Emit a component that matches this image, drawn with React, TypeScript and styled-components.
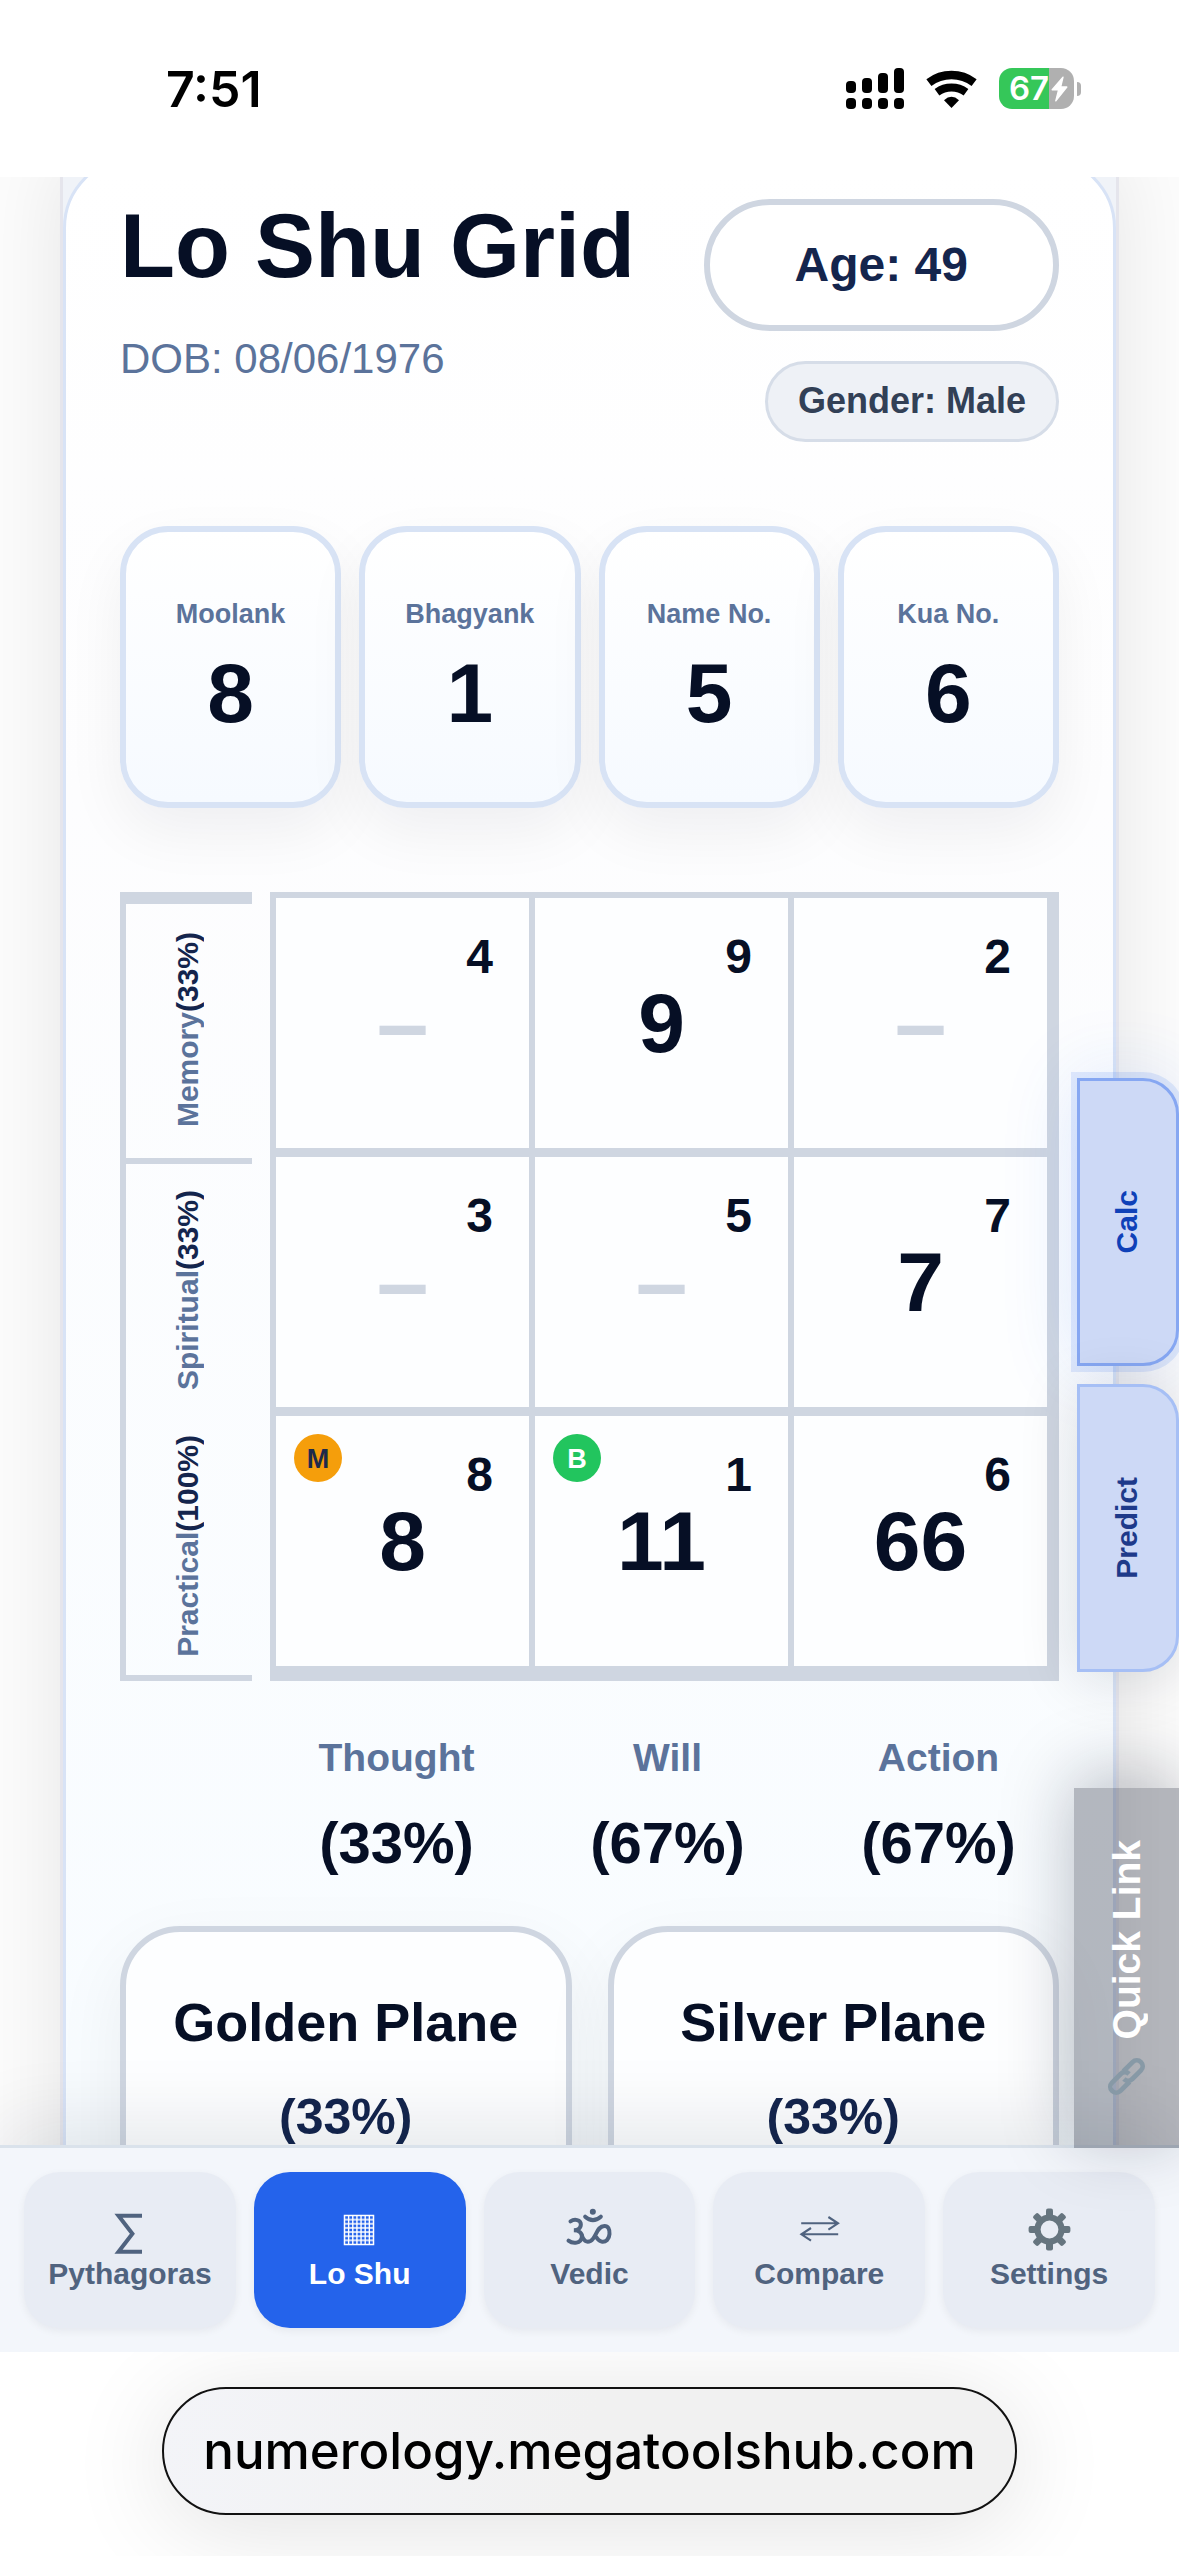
import React from "react";
import styled, { createGlobalStyle, css } from "styled-components";

const GlobalStyle = createGlobalStyle`
  *, *::before, *::after { box-sizing: border-box; }
  body {
    margin: 0;
    background: #ffffff;
    font-family: "Liberation Sans", Arial, sans-serif;
    color: #060f25;
  }
  h1, h2, p { margin: 0; }
  button { font-family: inherit; margin: 0; cursor: pointer; }
`;

const Screen = styled.div`
  display: flex;
  flex-direction: column;
  height: 100vh;
  overflow: hidden;
`;

/* ---------- status bar ---------- */

const StatusBar = styled.header`
  display: flex;
  flex: none;
  align-items: center;
  justify-content: space-between;
  height: 177px;
  padding: 0 98px 0 166px;
  background: #ffffff;
`;

const Clock = styled.time`
  font: 600 50px/60px Inter, sans-serif;
  color: #000000;
`;

const StatusIcons = styled.div`
  display: flex;
  align-items: center;
  gap: 22px;
`;

const Battery = styled.div`
  display: flex;
  align-items: center;
  gap: 3px;
`;

const BatteryBody = styled.div`
  display: flex;
  align-items: center;
  justify-content: flex-end;
  gap: 2px;
  width: 75px;
  height: 41px;
  padding-right: 6px;
  border-radius: 13px;
  background: linear-gradient(90deg, #35c759 67%, #b0b0b0 67%);
  color: #ffffff;
  font: 600 33px/41px Inter, sans-serif;

  svg { flex: none; }
`;

const BatteryTip = styled.span`
  width: 4px;
  height: 14px;
  border-radius: 0 6px 6px 0;
  background: #b0b0b0;
`;

/* ---------- page ---------- */

const Viewport = styled.main`
  position: relative;
  flex: 1;
  min-height: 0;
  overflow: hidden;
  background: #fcfcfc;
`;

const Panel = styled.div`
  margin: 0 60px;
  padding: 0 0 60px;
  border: solid #e5e5ec;
  border-width: 0 3px;
  background: #f0f3f8;
  box-shadow: 0 0 80px rgba(0, 0, 0, 0.09);
`;

const Card = styled.section`
  margin-top: -21px;
  padding: 40px 54px 60px;
  border: 3px solid #d8e3f6;
  border-radius: 72px;
  background: linear-gradient(180deg, #ffffff 0%, #fdfdfe 30%, #f8fcff 90%);
`;

const CardHeader = styled.div`
  display: flex;
  justify-content: space-between;
  align-items: flex-start;
  margin-bottom: 84px;
`;

const Title = styled.h1`
  margin-bottom: 42px;
  font-size: 90px;
  line-height: 94px;
`;

const BirthDate = styled.p`
  font-size: 42px;
  line-height: 48px;
  color: #5b739b;
`;

const Pills = styled.div`
  display: flex;
  flex-direction: column;
  align-items: flex-end;
  gap: 30px;
`;

const AgePill = styled.div`
  padding: 33px 85px;
  border: 6px solid #cfd6e1;
  border-radius: 66px;
  background: #ffffff;
  font-weight: 700;
  font-size: 48px;
  line-height: 54px;
  color: #14254d;
`;

const GenderPill = styled.div`
  padding: 16px 30px 17px;
  border: 3px solid #d6dde8;
  border-radius: 42px;
  background: #eef1f6;
  font-weight: 700;
  font-size: 36px;
  line-height: 42px;
  color: #324056;
`;

const Stats = styled.div`
  display: grid;
  grid-template-columns: repeat(4, 1fr);
  gap: 18px;
  margin-bottom: 84px;
`;

const Stat = styled.div`
  display: flex;
  flex-direction: column;
  align-items: center;
  justify-content: center;
  gap: 22px;
  height: 282px;
  border: 6px solid #d8e3f5;
  border-radius: 48px;
  background: linear-gradient(180deg, #ffffff, #f6faff);
  box-shadow: 0 24px 60px rgba(15, 23, 42, 0.06);
`;

const StatLabel = styled.span`
  font-weight: 700;
  font-size: 27px;
  line-height: 30px;
  color: #5b739b;
`;

const BigNumber = styled.span`
  font-weight: 700;
  font-size: 84px;
  line-height: 84px;
`;

/* ---------- lo shu grid ---------- */

const GridRow = styled.div`
  display: grid;
  grid-template-columns: 132px 1fr;
  gap: 18px;
`;

const PlaneRail = styled.div`
  display: grid;
  grid-template-rows: 258fr 254fr 259fr;
  border: solid #cfd6e1;
  border-width: 12px 0 0 6px;
`;

const RailItem = styled.div<{ $ruled: boolean }>`
  display: flex;
  align-items: center;
  justify-content: center;
  min-height: 0;
  padding: 0 3px 3px 0;
  border-bottom: ${(p) => (p.$ruled ? "6px solid #cfd6e1" : "0")};
`;

const RailText = styled.span`
  writing-mode: vertical-rl;
  transform: rotate(180deg);
  font-weight: 700;
  font-size: 30px;
  line-height: 36px;
  white-space: nowrap;
  color: #5b739b;

  strong { color: #14254d; }
`;

const Grid = styled.div`
  display: grid;
  grid-template-columns: repeat(3, 1fr);
  border: 6px solid #cfd6e1;
`;

const Cell = styled.div`
  position: relative;
  display: flex;
  align-items: center;
  justify-content: center;
  aspect-ratio: 1;
  border: solid #cfd6e1;
  border-width: 0 6px 9px 0;
  background: #fdfeff;
`;

const Position = styled.span`
  position: absolute;
  top: 35px;
  right: 36px;
  font-weight: 700;
  font-size: 48px;
  line-height: 48px;
`;

const Missing = styled(BigNumber)`
  font-size: 93px;
  color: #cfd6e1;
`;

const Badge = styled.span<{ $kind: "M" | "B" }>`
  position: absolute;
  top: 18px;
  left: 18px;
  width: 48px;
  height: 48px;
  border-radius: 50%;
  text-align: center;
  font-weight: 700;
  font-size: 27px;
  line-height: 50px;
  ${(p) =>
    p.$kind === "M"
      ? css`background: #f59e0b; color: #1e2a4a;`
      : css`background: #22c55e; color: #ffffff;`}
`;

const ColumnTotals = styled.div`
  display: grid;
  grid-template-columns: repeat(3, 1fr);
  gap: 30px;
  margin: 54px 0 50px;
  padding-left: 156px;
`;

const Total = styled.div`
  display: flex;
  flex-direction: column;
  align-items: center;
  gap: 30px;
  font-weight: 700;
  font-size: 58px;
  line-height: 66px;
`;

const TotalLabel = styled.span`
  font-size: 39px;
  line-height: 45px;
  color: #5b739b;
`;

const Planes = styled.div`
  display: grid;
  grid-template-columns: repeat(2, 1fr);
  gap: 36px;
`;

const PlaneCard = styled.article`
  display: flex;
  flex-direction: column;
  align-items: center;
  gap: 38px;
  padding: 60px 0;
  border: 6px solid #cfd6e1;
  border-radius: 60px;
  background: #fdfeff;
  box-shadow: 0 24px 72px rgba(15, 23, 42, 0.06);
`;

const PlaneTitle = styled.h2`
  font-size: 54px;
  line-height: 60px;
`;

const PlaneValue = styled.p`
  font-weight: 700;
  font-size: 50px;
  line-height: 54px;
  color: #14254d;
`;

/* ---------- floating side controls ---------- */

const SideTabs = styled.div`
  position: absolute;
  top: 901px;
  right: 0;
  display: flex;
  flex-direction: column;
  gap: 18px;
`;

const SideTab = styled.button<{ $active?: boolean }>`
  display: flex;
  align-items: center;
  justify-content: center;
  width: 102px;
  height: 288px;
  padding: 0 3px 0 0;
  border: 3px solid ${(p) => (p.$active ? "#86a7f2" : "#a6bff5")};
  border-radius: 0 36px 36px 0;
  background: #cdd9f6;
  color: ${(p) => (p.$active ? "#0f41b8" : "#1e3a8a")};
  box-shadow: ${(p) =>
    p.$active
      ? "0 0 0 6px rgba(37, 99, 235, 0.12), 0 0 80px rgba(37, 99, 235, 0.14)"
      : "0 6px 60px rgba(15, 23, 42, 0.14)"};
`;

const SideText = styled.span`
  writing-mode: vertical-rl;
  transform: rotate(180deg);
  font-weight: 700;
  font-size: 30px;
  line-height: 36px;
`;

const QuickLink = styled.button`
  position: absolute;
  right: 0;
  bottom: 100%;
  display: flex;
  flex-direction: column;
  align-items: center;
  justify-content: center;
  gap: 18px;
  width: 105px;
  height: 360px;
  padding: 0;
  border: 0;
  background: rgba(15, 23, 42, 0.3);
  color: #ffffff;
  box-shadow: 0 -12px 72px rgba(15, 23, 42, 0.28);
`;

const QuickText = styled.span`
  writing-mode: vertical-rl;
  transform: rotate(180deg);
  font-weight: 700;
  font-size: 39px;
  line-height: 45px;
`;

/* ---------- bottom navigation ---------- */

const Nav = styled.nav`
  position: relative;
  z-index: 1;
  display: grid;
  flex: none;
  grid-template-columns: repeat(5, 1fr);
  gap: 18px;
  padding: 24px;
  border-top: 3px solid #dae2eb;
  background: #f3f6fb;
  box-shadow: 0 -24px 72px rgba(15, 23, 42, 0.09);
`;

const NavItem = styled.button<{ $active?: boolean }>`
  display: flex;
  flex-direction: column;
  align-items: center;
  justify-content: center;
  gap: 6px;
  min-width: 0;
  height: 156px;
  padding: 0;
  border: 0;
  border-radius: 36px;
  background: ${(p) => (p.$active ? "#2463eb" : "#e8ecf4")};
  color: ${(p) => (p.$active ? "#ffffff" : "#50637f")};
  font-weight: 700;
  font-size: 30px;
  line-height: 36px;
  box-shadow: 0 3px 9px rgba(15, 23, 42, 0.06);
`;

const NavIcon = styled.svg`
  display: block;
  width: 45px;
  height: 42px;
  overflow: visible;
  fill: none;
  stroke: currentColor;
`;

/* ---------- browser address bar ---------- */

const AddressBar = styled.footer`
  position: relative;
  z-index: 2;
  display: flex;
  flex: none;
  justify-content: center;
  height: 204px;
  padding: 35px 162px 41px;
  overflow: hidden;
  background: #ffffff;
`;

const Address = styled.button`
  flex: 1;
  padding: 0;
  border: 2px solid #111111;
  border-radius: 64px;
  background: linear-gradient(100deg, #f3f4f8, #f1f1f1 50%);
  color: #000000;
  font: 500 51px/60px Inter, sans-serif;
  box-shadow: 0 12px 100px rgba(0, 0, 0, 0.12);
`;

/* ---------- drawings ---------- */

const SignalIcon = () => (
  <svg width="58" height="41" viewBox="0 0 58 41" aria-hidden="true">
    {[13, 10, 5, 0].map((y, i) => (
      <g key={y}>
        <rect x={i * 16} y={y} width="10" height={25 - y} rx="4" />
        <rect x={i * 16} y="30" width="10" height="11" rx="4" />
      </g>
    ))}
  </svg>
);

const WifiIcon = () => (
  <svg width="51" height="38" viewBox="0 0 51 38" aria-hidden="true">
    <path d="M2.9 12.6A37.6 37.6 0 0 1 48.1 12.6" fill="none" stroke="#000" strokeWidth="8.4" />
    <path d="M11 22.2A24.6 24.6 0 0 1 40 22.2" fill="none" stroke="#000" strokeWidth="8" />
    <path d="M18 30.2Q25.5 23.4 33 30.2L25.5 38Z" />
  </svg>
);

const BoltIcon = () => (
  <svg width="17" height="26" viewBox="0 0 17 26" aria-hidden="true">
    <path
      d="M12 1.2L1.2 13.8H7.6L4.8 24.8L15.8 11H9.6Z"
      fill="#fff"
      stroke="#fff"
      strokeWidth="1.4"
      strokeLinejoin="round"
    />
  </svg>
);

const LinkIcon = () => (
  <svg width="39" height="39" viewBox="0 0 39 39" fill="none" stroke="#8799a6" strokeWidth="4.8" aria-hidden="true">
    <g transform="rotate(-45 19.5 19.5)">
      <path d="M18 25.4H5A5.9 5.9 0 0 1 5 13.6H17.2A5.9 5.9 0 0 1 23.1 19.5" />
      <path d="M21 13.6H34A5.9 5.9 0 0 1 34 25.4H21.8A5.9 5.9 0 0 1 15.9 19.5" />
    </g>
  </svg>
);

const SumIcon = () => (
  <NavIcon viewBox="0 0 45 42" strokeWidth="4" aria-hidden="true">
    <path d="M35 7.8H11.5L25.4 25.8L11.5 43.8H35" />
  </NavIcon>
);

const GridIcon = () => (
  <NavIcon viewBox="0 0 45 42" aria-hidden="true">
    <rect x="7.5" y="7.5" width="29" height="29" strokeWidth="1.5" />
    {[1, 2, 3, 4, 5, 6].map((i) => (
      <g key={i}>
        <path d={`M${7.5 + i * 4.14} 7.5V36.5`} strokeWidth="1.4" />
        <path d={`M7.5 ${7.5 + i * 4.14}H36.5`} strokeWidth="2" opacity="0.75" />
      </g>
    ))}
  </NavIcon>
);

const OmIcon = () => (
  <NavIcon viewBox="79.5 54 135 126" strokeWidth="12" strokeLinecap="round" aria-hidden="true">
    <circle cx="157" cy="65" r="9" fill="currentColor" stroke="none" />
    <path d="M134 80Q157 101 181 80" />
    <path d="M90 94C102 86 121 89 121 103C121 116 111 121 100 121C116 121 126 129 124 142C121 160 98 163 84 152" />
    <path d="M124 136C128 152 138 159 150 153C168 143 168 108 192 108C203 108 208 118 207 132C206 148 196 156 185 155C174 154 170 146 164 136" />
  </NavIcon>
);

const SwapIcon = () => (
  <NavIcon viewBox="0 0 45 42" strokeWidth="2.1" aria-hidden="true">
    <path d="M4.2 15.3H40.6M31.4 9L41 15.3L31.4 21.6" />
    <path d="M41.2 26.3H4.8M14 20L4.4 26.3L14 32.6" />
  </NavIcon>
);

const GearIcon = () => (
  <NavIcon viewBox="0 0 45 42" aria-hidden="true">
    <g stroke="#66757f">
      <circle cx="22.5" cy="21.5" r="12" strokeWidth="6.2" />
      {[0, 45, 90, 135, 180, 225, 270, 315].map((a) => (
        <rect
          key={a}
          x="19"
          y="0.6"
          width="7"
          height="8.6"
          rx="2"
          fill="#66757f"
          stroke="none"
          transform={`rotate(${a} 22.5 21.5)`}
        />
      ))}
    </g>
  </NavIcon>
);

/* ---------- data ---------- */

const stats = [
  { label: "Moolank", value: 8 },
  { label: "Bhagyank", value: 1 },
  { label: "Name No.", value: 5 },
  { label: "Kua No.", value: 6 },
];

const rail = [
  { name: "Memory", value: "(33%)", ruled: true },
  { name: "Spiritual", value: "(33%)", ruled: false },
  { name: "Practical", value: "(100%)", ruled: true },
];

const cells: { position: number; value?: string; badge?: "M" | "B" }[] = [
  { position: 4 },
  { position: 9, value: "9" },
  { position: 2 },
  { position: 3 },
  { position: 5 },
  { position: 7, value: "7" },
  { position: 8, value: "8", badge: "M" },
  { position: 1, value: "11", badge: "B" },
  { position: 6, value: "66" },
];

const totals = [
  { name: "Thought", value: "(33%)" },
  { name: "Will", value: "(67%)" },
  { name: "Action", value: "(67%)" },
];

const planes = [
  { name: "Golden Plane", value: "(33%)" },
  { name: "Silver Plane", value: "(33%)" },
];

const navItems = [
  { label: "Pythagoras", Icon: SumIcon },
  { label: "Lo Shu", Icon: GridIcon, active: true },
  { label: "Vedic", Icon: OmIcon },
  { label: "Compare", Icon: SwapIcon },
  { label: "Settings", Icon: GearIcon },
];

export default function App() {
  return (
    <Screen>
      <GlobalStyle />
      <StatusBar>
        <Clock>7:51</Clock>
        <StatusIcons>
          <SignalIcon />
          <WifiIcon />
          <Battery>
            <BatteryBody>
              <span>67</span>
              <BoltIcon />
            </BatteryBody>
            <BatteryTip />
          </Battery>
        </StatusIcons>
      </StatusBar>

      <Viewport>
        <Panel>
          <Card>
            <CardHeader>
              <div>
                <Title>Lo Shu Grid</Title>
                <BirthDate>DOB: 08/06/1976</BirthDate>
              </div>
              <Pills>
                <AgePill>Age: 49</AgePill>
                <GenderPill>Gender: Male</GenderPill>
              </Pills>
            </CardHeader>

            <Stats>
              {stats.map((s) => (
                <Stat key={s.label}>
                  <StatLabel>{s.label}</StatLabel>
                  <BigNumber>{s.value}</BigNumber>
                </Stat>
              ))}
            </Stats>

            <GridRow>
              <PlaneRail>
                {rail.map((r) => (
                  <RailItem key={r.name} $ruled={r.ruled}>
                    <RailText>
                      {r.name}
                      <strong>{r.value}</strong>
                    </RailText>
                  </RailItem>
                ))}
              </PlaneRail>
              <Grid>
                {cells.map((c) => (
                  <Cell key={c.position}>
                    {c.badge && <Badge $kind={c.badge}>{c.badge}</Badge>}
                    <Position>{c.position}</Position>
                    {c.value ? <BigNumber>{c.value}</BigNumber> : <Missing>–</Missing>}
                  </Cell>
                ))}
              </Grid>
            </GridRow>

            <ColumnTotals>
              {totals.map((t) => (
                <Total key={t.name}>
                  <TotalLabel>{t.name}</TotalLabel>
                  <span>{t.value}</span>
                </Total>
              ))}
            </ColumnTotals>

            <Planes>
              {planes.map((p) => (
                <PlaneCard key={p.name}>
                  <PlaneTitle>{p.name}</PlaneTitle>
                  <PlaneValue>{p.value}</PlaneValue>
                </PlaneCard>
              ))}
            </Planes>
          </Card>
        </Panel>

        <SideTabs>
          <SideTab type="button" $active>
            <SideText>Calc</SideText>
          </SideTab>
          <SideTab type="button">
            <SideText>Predict</SideText>
          </SideTab>
        </SideTabs>
      </Viewport>

      <Nav>
        {navItems.map(({ label, Icon, active }) => (
          <NavItem key={label} type="button" $active={active}>
            <Icon />
            <span>{label}</span>
          </NavItem>
        ))}
        <QuickLink type="button">
          <QuickText>Quick Link</QuickText>
          <LinkIcon />
        </QuickLink>
      </Nav>

      <AddressBar>
        <Address type="button">numerology.megatoolshub.com</Address>
      </AddressBar>
    </Screen>
  );
}
